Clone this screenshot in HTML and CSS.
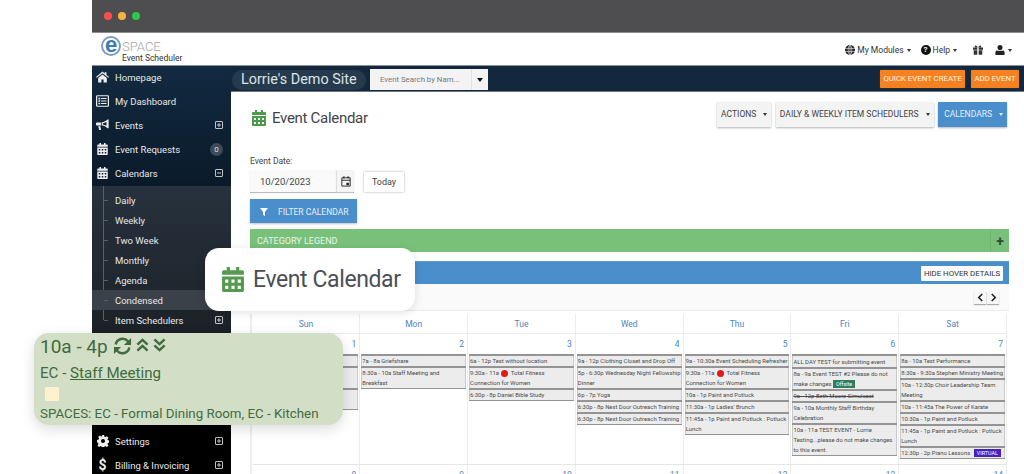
FILE: index.html
```html
<!DOCTYPE html>
<html lang="en">
<head>
<meta charset="utf-8">
<title>Event Calendar</title>
<link rel="stylesheet" href="styles.css">
</head>
<body>
<svg class="defs" width="0" height="0" aria-hidden="true">
  <symbol id="i-cal" viewBox="0 0 14 16"><path d="M3 0h2v2h4V0h2v2h2a1 1 0 0 1 1 1v2H0V3a1 1 0 0 1 1-1h2zM0 6h14v9a1 1 0 0 1-1 1H1a1 1 0 0 1-1-1zm2 2v2h2V8zm4 0v2h2V8zm4 0v2h2V8zm-8 4v2h2v-2zm4 0v2h2v-2zm4 0v2h2v-2z" fill-rule="evenodd" fill="currentColor"/></symbol>
  <symbol id="i-home" viewBox="0 0 18 15"><path d="M9 0l3 2.500V1h2.500v3.600L18 7.500 17 8.700 9 2.200 1 8.700 0 7.500zM3 9l6-5 6 5v6h-4.500v-4h-3v4H3z" fill="currentColor"/></symbol>
  <symbol id="i-list" viewBox="0 0 16 14"><path d="M1.500 0h13A1.500 1.500 0 0 1 16 1.500v11a1.500 1.500 0 0 1-1.500 1.500h-13A1.500 1.500 0 0 1 0 12.500v-11A1.500 1.500 0 0 1 1.500 0zm0 1.300v11.400h13V1.300zM3 3h2v2H3zm3 .4h7v1.200H6zM3 6h2v2H3zm3 .4h7v1.200H6zM3 9h2v2H3zm3 .4h7v1.200H6z" fill-rule="evenodd" fill="currentColor"/></symbol>
  <symbol id="i-horn" viewBox="0 0 18 15"><path d="M16 0h1.500v12H16c-2-2-5-3.500-8-3.700V3.700C11 3.500 14 2 16 0zM14.500 3.300C13 4.200 11 4.900 9.500 5.100v1.800c1.500.2 3.500.9 5 1.800zM1 4h6v4.300H1c-.6 0-1-.4-1-1V5c0-.6.4-1 1-1zm2 5.300h3l1 5H4.500z" fill-rule="evenodd" fill="currentColor"/></symbol>
  <symbol id="i-gear" viewBox="0 0 16 16"><path d="M6.500 0h3l.4 2.200 1.400.6L13.200 1.500l2.100 2.100-1.300 1.900.6 1.400 2.200.4v3l-2.200.4-.6 1.400 1.300 1.900-2.100 2.100-1.900-1.300-1.400.6-.4 2.200h-3l-.4-2.200-1.400-.6-1.900 1.300L.7 14l1.300-1.900-.6-1.400L0 9.500v-3l2.200-.4.6-1.400L1.500 2.800 3.600.7l1.900 1.300 1.400-.6zM8 5.300a2.700 2.700 0 1 0 0 5.400 2.700 2.700 0 0 0 0-5.400z" fill-rule="evenodd" fill="currentColor"/></symbol>
  <symbol id="i-funnel" viewBox="0 0 12 12"><path d="M0 0h12L7.500 5.500V12l-3-2V5.500z" fill="currentColor"/></symbol>
  <symbol id="i-plusbox" viewBox="0 0 8 8"><path d="M1 .5h6a.5.500 0 0 1 .5.500v6a.5.500 0 0 1-.5.500H1A.5.500 0 0 1 .5 7V1A.5.500 0 0 1 1 .5zM2 4h4M4 2v4" fill="none" stroke="currentColor" stroke-width=".9"/></symbol>
  <symbol id="i-minusbox" viewBox="0 0 8 8"><path d="M1 .5h6a.5.500 0 0 1 .5.500v6a.5.500 0 0 1-.5.500H1A.5.500 0 0 1 .5 7V1A.5.500 0 0 1 1 .5zM2 4h4" fill="none" stroke="currentColor" stroke-width=".9"/></symbol>
  <symbol id="i-globe" viewBox="0 0 14 14"><circle cx="7" cy="7" r="7" fill="currentColor"/><path d="M0 4.800h14M0 9.200h14M7 0v14M7 0C3.500 3 3.500 11 7 14M7 0c3.500 3 3.500 11 0 14" fill="none" stroke="#fff" stroke-width=".8"/></symbol>
  <symbol id="i-gift" viewBox="0 0 14 13"><path d="M0 3h14v3H8V3H6v3H0zM1 7h5v6H1.500a.5.500 0 0 1-.5-.5zm7 0h5v5.500a.5.500 0 0 1-.5.500H8zM3 2.800C1.500 1.500 2.800-.5 4.500.4 5.700 1 6.600 2 7 3c.4-1 1.300-2 2.500-2.600 1.700-.9 3 1.100 1.500 2.400z" fill="currentColor"/></symbol>
  <symbol id="i-user" viewBox="0 0 12 13"><circle cx="6" cy="3.300" r="3.300" fill="currentColor"/><path d="M2 7.200c1.200.6 6.800.6 8 0 1.400.4 2 1.500 2 3v1.500c0 .7-.6 1.300-1.300 1.300H1.300C.6 13 0 12.400 0 11.700v-1.500c0-1.500.6-2.600 2-3z" fill="currentColor"/></symbol>
  <symbol id="i-picker" viewBox="0 0 12 13"><path d="M1 2h10v10H1zM1 5h10M3.500 0v3M8.500 0v3" fill="none" stroke="currentColor" stroke-width="1.100"/><rect x="6.500" y="8" width="3" height="3" fill="currentColor"/></symbol>
  <symbol id="i-sync" viewBox="0 0 20 20"><path d="M2.800 8.500A7.500 7.500 0 0 1 15.800 5l2.200 2.500M17.200 11.500A7.500 7.500 0 0 1 4.200 15L2 12.500" fill="none" stroke="currentColor" stroke-width="2.600"/><path d="M19 1.500V9h-7.500zM1 18.500V11h7.500z" fill="currentColor"/></symbol>
  <symbol id="i-up2" viewBox="0 0 14 16"><path d="M1.500 7.500L7 2.500l5.500 5M1.500 14L7 9l5.500 5" fill="none" stroke="currentColor" stroke-width="2.600"/></symbol>
  <symbol id="i-down2" viewBox="0 0 14 16"><path d="M1.500 2L7 7l5.500-5M1.500 8.500L7 13.500l5.500-5" fill="none" stroke="currentColor" stroke-width="2.600"/></symbol>
  <symbol id="i-left" viewBox="0 0 8 10"><path d="M6 1L2 5l4 4" fill="none" stroke="currentColor" stroke-width="1.800"/></symbol>
  <symbol id="i-right" viewBox="0 0 8 10"><path d="M2 1l4 4-4 4" fill="none" stroke="currentColor" stroke-width="1.800"/></symbol>
</svg>

<div class="window">
  <div class="chrome">
    <span class="dot dot-red"></span><span class="dot dot-yellow"></span><span class="dot dot-green"></span>
  </div>

  <header class="header">
    <div class="logo">
      <span class="logo-e">e</span>
      <div class="logo-text">
        <span class="logo-space">SPACE</span>
        <span class="logo-sub">Event Scheduler</span>
      </div>
    </div>
    <nav class="top-links">
      <span class="top-link link-modules"><svg class="ti"><use href="#i-globe"/></svg>My Modules<i class="caret"></i></span>
      <span class="top-link link-help"><span class="help-ic">?</span>Help<i class="caret"></i></span>
      <span class="top-link link-gift"><svg class="ti"><use href="#i-gift"/></svg></span>
      <span class="top-link link-user"><svg class="ti"><use href="#i-user"/></svg><i class="caret"></i></span>
    </nav>
  </header>

  <div class="main">
    <aside class="sidebar">
      <div class="side-top">
        <a class="side-item"><svg class="si"><use href="#i-home"/></svg><span>Homepage</span></a>
        <a class="side-item"><svg class="si"><use href="#i-list"/></svg><span>My Dashboard</span></a>
        <a class="side-item"><svg class="si"><use href="#i-horn"/></svg><span>Events</span><svg class="pm"><use href="#i-plusbox"/></svg></a>
        <a class="side-item"><svg class="si"><use href="#i-cal"/></svg><span>Event Requests</span><b class="count">0</b></a>
        <a class="side-item"><svg class="si"><use href="#i-cal"/></svg><span>Calendars</span><svg class="pm"><use href="#i-minusbox"/></svg></a>
      </div>
      <ul class="sub">
        <li>Daily</li>
        <li>Weekly</li>
        <li>Two Week</li>
        <li>Monthly</li>
        <li>Agenda</li>
        <li class="sub-active">Condensed</li>
        <li>Item Schedulers<svg class="pm"><use href="#i-plusbox"/></svg></li>
      </ul>
      <div class="side-hidden"></div>
      <div class="side-bottom">
        <a class="side-item"><svg class="si gear"><use href="#i-gear"/></svg><span>Settings</span><svg class="pm"><use href="#i-plusbox"/></svg></a>
        <a class="side-item"><b class="si dollar">$</b><span>Billing &amp; Invoicing</span><svg class="pm"><use href="#i-plusbox"/></svg></a>
      </div>
    </aside>

    <div class="right">
      <div class="navbar">
        <span class="site">Lorrie's Demo Site</span>
        <div class="search">
          <span class="search-text">Event Search by Nam...</span>
          <span class="search-drop"><i class="caret dark"></i></span>
        </div>
        <div class="nav-actions">
          <span class="orange orange-quick">QUICK EVENT CREATE</span>
          <span class="orange orange-add">ADD EVENT</span>
        </div>
      </div>

      <div class="content">
        <div class="title-row">
          <h1 class="title"><svg class="title-ic"><use href="#i-cal"/></svg>Event Calendar</h1>
          <div class="title-btns">
            <span class="btn">ACTIONS<i class="caret dark"></i></span>
            <span class="btn">DAILY &amp; WEEKLY ITEM SCHEDULERS<i class="caret dark"></i></span>
            <span class="btn btn-blue">CALENDARS<i class="caret"></i></span>
          </div>
        </div>

        <label class="date-label">Event Date:</label>
        <div class="date-row">
          <div class="date-input"><span class="date-val">10/20/2023</span><span class="date-pick"><svg><use href="#i-picker"/></svg></span></div>
          <span class="today">Today</span>
        </div>
        <div class="filter"><svg><use href="#i-funnel"/></svg>FILTER CALENDAR</div>

        <div class="legend"><span>CATEGORY LEGEND</span><span class="legend-plus">+</span></div>

        <div class="panel-bar"><span class="hide-hover">HIDE HOVER DETAILS</span></div>
        <div class="cal-nav"><span class="arrow"><svg><use href="#i-left"/></svg></span><span class="arrow"><svg><use href="#i-right"/></svg></span></div>

        <div class="cal">
          <div class="cal-head">
            <div>Sun</div><div>Mon</div><div>Tue</div><div>Wed</div><div>Thu</div><div>Fri</div><div>Sat</div>
          </div>
          <div class="week">
            <div class="day"><div class="num">1</div><div class="ev"></div><div class="ev two"></div><div class="ev two"></div></div>
            <div class="day"><div class="num">2</div>
              <div class="ev">7a - 8a Griefshare</div>
              <div class="ev">8:30a - 10a Staff Meeting and<br>Breakfast</div>
            </div>
            <div class="day"><div class="num">3</div>
              <div class="ev">6a - 12p Test without location</div>
              <div class="ev">9:30a - 11a <i class="red"></i> Total Fitness Connection for Women</div>
              <div class="ev">6:30p - 8p Daniel Bible Study</div>
            </div>
            <div class="day"><div class="num">4</div>
              <div class="ev">9a - 12p Clothing Closet and Drop Off</div>
              <div class="ev">5p - 6:30p Wednesday Night Fellowship Dinner</div>
              <div class="ev">6p - 7p Yoga</div>
              <div class="ev">6:30p - 8p Next Door Outreach Training</div>
              <div class="ev">6:30p - 8p Next Door Outreach Training</div>
            </div>
            <div class="day"><div class="num">5</div>
              <div class="ev">9a - 10:30a Event Scheduling Refresher</div>
              <div class="ev">9:30a - 11a <i class="red"></i> Total Fitness Connection for Women</div>
              <div class="ev">10a - 1p Paint and Potluck</div>
              <div class="ev">11:30a - 1p Ladies' Brunch</div>
              <div class="ev">11:45a - 1p Paint and Potluck : Potluck Lunch</div>
            </div>
            <div class="day"><div class="num">6</div>
              <div class="ev allday">ALL DAY TEST for submitting event</div>
              <div class="ev">8a - 9a Event TEST #2 Please do not make changes <b class="tag tag-off">Offsite</b></div>
              <div class="ev struck"><s>9a - 12p Beth Moore Simulcast</s></div>
              <div class="ev">9a - 10a Monthly Staff Birthday Celebration</div>
              <div class="ev">10a - 11a TEST EVENT - Lorrie Testing...please do not make changes to this event.</div>
            </div>
            <div class="day"><div class="num">7</div>
              <div class="ev">8a - 10a Test Performance</div>
              <div class="ev">8:30a - 9:30a Stephen Ministry Meeting</div>
              <div class="ev">10a - 12:30p Choir Leadership Team Meeting</div>
              <div class="ev">10a - 11:45a The Power of Karate</div>
              <div class="ev">10:30a - 1p Paint and Potluck</div>
              <div class="ev">11:45a - 1p Paint and Potluck : Potluck Lunch</div>
              <div class="ev">12:30p - 2p Piano Lessons <b class="tag tag-virt">VIRTUAL</b></div>
            </div>
          </div>
          <div class="week">
            <div class="day"><div class="num">8</div></div>
            <div class="day"><div class="num">9</div></div>
            <div class="day"><div class="num">10</div></div>
            <div class="day"><div class="num">11</div></div>
            <div class="day"><div class="num">12</div></div>
            <div class="day"><div class="num">13</div></div>
            <div class="day"><div class="num">14</div></div>
          </div>
        </div>
      </div>
    </div>
  </div>
</div>

<div class="callout"><svg class="callout-ic"><use href="#i-cal"/></svg>Event Calendar</div>

<div class="hover-card">
  <div class="hc-time">10a - 4p <svg class="hc-sync"><use href="#i-sync"/></svg><svg class="hc-ch"><use href="#i-up2"/></svg><svg class="hc-ch"><use href="#i-down2"/></svg></div>
  <div class="hc-title">EC - <u>Staff Meeting</u></div>
  <div class="hc-swatch"></div>
  <div class="hc-spaces">SPACES: EC - Formal Dining Room, EC - Kitchen</div>
</div>
</body>
</html>
```

FILE: styles.css
```css
* { box-sizing: border-box; }
html, body { margin: 0; padding: 0; height: 474px; overflow: hidden; background: #fff; }
body { font-family: Roboto, "Liberation Sans", sans-serif; position: relative; color: #444; }
.defs { position: absolute; }
i { font-style: normal; }

.window { margin-left: 92px; height: 474px; display: flex; flex-direction: column; overflow: hidden; }

.chrome { height: 33px; background: #4e4e50; border-bottom: 1px solid #8d8d8f; display: flex; align-items: center; gap: 6px; padding: 0 0 1px 12px; flex: none; }
.dot { width: 8px; height: 8px; border-radius: 50%; }
.dot-red { background: #fb4f4f; }
.dot-yellow { background: #fbb13c; }
.dot-green { background: #2ac949; }

.header { height: 33px; flex: none; background: #fff; display: flex; justify-content: space-between; align-items: center; padding: 0 12px 0 9px; border-bottom: 1px solid #8b9099; }
.logo { display: flex; position: relative; height: 32px; }
.logo-e { width: 20px; height: 20px; margin-top: 3px; border-radius: 50%; border: 2px solid #7f9dbd; color: #3a7ab5; font: 700 22px/13px "Liberation Sans", sans-serif; text-align: center; background: #fff; }
.logo-text { display: flex; flex-direction: column; margin-left: 1px; }
.logo-space { font: 300 13px/14px Roboto, sans-serif; color: #a3a5a8; margin-top: 7px; }
.logo-sub { font: 400 8.500px/9px Roboto, sans-serif; color: #333; }

.top-links { display: flex; align-items: center; font-size: 8.500px; color: #333; height: 100%; padding-top: 2px; }
.top-link { display: inline-flex; align-items: center; }
.ti { width: 10px; height: 10px; color: #222; margin-right: 2px; }
.help-ic { width: 10px; height: 10px; border-radius: 50%; background: #111; color: #fff; font: 700 8px/10px Roboto, sans-serif; text-align: center; margin-right: 2px; }
.link-help { margin-left: 10px; }
.link-gift { margin-left: 16px; }
.link-gift .ti { color: #333; margin-right: 0; }
.link-user { margin-left: 12px; }
.link-user .ti { margin-right: 0; }
.caret { display: inline-block; width: 0; height: 0; border-left: 2.500px solid transparent; border-right: 2.500px solid transparent; border-top: 3px solid currentColor; margin-left: 3px; }

.main { flex: 1; display: flex; min-height: 0; }

.sidebar { width: 139px; flex: none; background: #000; color: #e8e8e8; font-size: 9.500px; display: flex; flex-direction: column; }
.side-top { background: linear-gradient(#132a40, #0a1a2a); height: 120px; flex: none; }
.side-item { height: 24px; display: flex; align-items: center; padding: 0 8px 0 4px; }
.side-top .side-item { padding-bottom: 2px; }
.side-item span { flex: 1; margin-left: 6px; }
.si { width: 13px; height: 12px; color: #eee; flex: none; }
.gear { width: 12px; height: 12px; margin-left: 1px; }
.dollar { font: 700 14px/14px Roboto, sans-serif; text-align: center; height: 14px; }
.pm { width: 8px; height: 8px; color: #d5d5d5; flex: none; }
.count { width: 13px; height: 13px; border-radius: 50%; background: #3d4a58; color: #ddd; font: 400 8px/13px Roboto, sans-serif; text-align: center; }
.sub { list-style: none; margin: 0; padding: 4px 0 3px; background: linear-gradient(#27323e, #1c2127); height: 147px; flex: none; position: relative; }
.sub::before { content: ""; position: absolute; left: 11px; top: 0; bottom: 13px; width: 1px; background: #56606a; }
.sub li { height: 20px; display: flex; align-items: center; justify-content: space-between; padding: 0 8px 0 23px; position: relative; }
.sub li::before { content: ""; position: absolute; left: 12px; top: 10px; width: 4px; height: 1px; background: #56606a; }
.sub-active { background: #3b4149; }
.side-hidden { height: 96px; flex: none; }
.side-bottom { flex: none; }

.right { flex: 1; min-width: 0; display: flex; flex-direction: column; }
.navbar { height: 26px; flex: none; background: #13283d; display: flex; align-items: flex-start; padding: 3px 5px 0 1px; border-bottom: 1px solid #6d7680; }
.site { height: 20px; margin-top: 1px; border-radius: 10px; background: #263a4e; color: #dfe3e6; font-size: 14.400px; line-height: 20px; padding: 0 9px; white-space: nowrap; width: 134px; }
.search { width: 118px; height: 21px; margin-left: 4px; background: #f3f3f3; display: flex; align-items: center; font-size: 7.800px; color: #777; }
.search-text { flex: 1; padding-left: 10px; white-space: nowrap; }
.search-drop { width: 17px; height: 100%; border-left: 1px solid #e2e2e2; display: flex; align-items: center; justify-content: center; }
.caret.dark { color: #333; }
.search-drop .caret { margin: 0; border-left-width: 3px; border-right-width: 3px; border-top-width: 4px; color: #111; }
.nav-actions { margin-left: auto; display: flex; gap: 6px; margin-top: 1px; }
.orange { height: 18px; background: #f58220; color: #fff3e6; font-size: 7.800px; line-height: 18px; text-align: center; border-radius: 1px; box-shadow: 0 0 1px #a85a10; white-space: nowrap; }
.orange-quick { width: 85px; }
.orange-add { width: 48px; }

.content { flex: 1; min-height: 0; padding: 0 15px 0 19px; overflow: hidden; background: #fff; }
.title-row { display: flex; justify-content: space-between; height: 64px; padding-top: 10px; }
.title { margin: 0; font-weight: 400; font-size: 15px; line-height: 32px; height: 32px; color: #444; display: flex; align-items: flex-start; letter-spacing: -0.3px; }
.title-ic { width: 14px; height: 16px; color: #4c9a4c; margin: 8px 6px 0 2px; }
.title-btns { display: flex; gap: 4.500px; margin-right: 2px; height: 25px; }
.btn { height: 25px; background: #f3f3f3; color: #444; font-size: 8.500px; line-height: 25px; padding: 0 4px; box-shadow: 0 1px 2px rgba(0,0,0,.3); white-space: nowrap; }
.btn .caret { margin-left: 7px; vertical-align: middle; }
.btn-blue { background: #4a8ecb; color: #e4effa; padding-left: 6px; }

.date-label { display: block; font-size: 8.500px; line-height: 10px; color: #444; }
.date-row { display: flex; align-items: center; margin-top: 5px; gap: 10px; height: 22px; }
.date-input { width: 104px; height: 22px; background: #fafafa; border-bottom: 1px solid #bbb; display: flex; justify-content: space-between; box-shadow: 0 0 1px #ccc; }
.date-val { font-size: 9.500px; line-height: 22px; padding-left: 10px; color: #444; }
.date-pick { width: 17px; display: flex; align-items: center; justify-content: center; background: #f5f5f5; box-shadow: -1px 0 1px #ddd; }
.date-pick svg { width: 10px; height: 11px; color: #222; }
.today { width: 40px; height: 20px; background: #fff; box-shadow: 0 0 2px rgba(0,0,0,.35); font-size: 9px; line-height: 20px; text-align: center; color: #444; }
.filter { width: 107px; height: 24px; margin-top: 6px; padding-top: 1px; background: #4a8ecb; color: #e4effa; font-size: 8.500px; line-height: 24px; display: flex; align-items: center; padding-left: 10px; box-shadow: 0 1px 2px rgba(0,0,0,.25); }
.filter svg { width: 8px; height: 8px; color: #fff; margin-right: 10px; }
.legend { height: 23px; margin-top: 6px; background: #79c17a; color: #e9f5e9; font-size: 9px; line-height: 24px; display: flex; justify-content: space-between; padding-left: 7px; }
.legend-plus { width: 19px; border-left: 1px solid #6cb46e; color: #2f4d33; font: 700 14px/24px Roboto, sans-serif; text-align: center; }
.panel-bar { height: 23px; margin-top: 9px; background: #4a8ecb; display: flex; justify-content: flex-end; align-items: center; padding-right: 6px; border-top: 1px solid #5b9bd3; }
.hide-hover { height: 15px; width: 82px; background: #fbfbfb; color: #333; font-size: 7.800px; line-height: 15px; text-align: center; border-radius: 1px; }
.cal-nav { height: 27px; background: #fafafa; display: flex; justify-content: flex-end; align-items: center; gap: 1px; padding-right: 10px; border-bottom: 1px solid #ececec; }
.arrow { width: 12px; height: 13px; background: #f7f7f7; box-shadow: 0 1px 1px rgba(0,0,0,.3); color: #222; display: flex; align-items: center; justify-content: center; }
.arrow svg { width: 7px; height: 9px; }
.cal { width: 757px; padding-left: .5px; border-left: 2px solid #eee; margin-top: 3px; }
.cal-head { display: grid; grid-template-columns: repeat(7, 1fr); height: 20px; border-bottom: 1px solid #ececec; }
.cal-head div { color: #4a86c0; font-size: 8.500px; line-height: 20px; text-align: center; border-right: 1px solid #ececec; }
.week { display: grid; grid-template-columns: repeat(7, 1fr); height: 131px; border-bottom: 1px solid #e6e6e6; }
.week + .week { height: 20px; }
.day { border-right: 1.500px solid #ececec; padding: 3px 1px 0 1px; min-width: 0; }
.num { color: #4a86c0; font-size: 8.500px; line-height: 14px; text-align: right; padding-right: 2px; height: 17px; }
.ev { background: #ececec; border-top: 2px solid #949494; box-shadow: inset 1px 0 #c8c8c8, inset -1px 0 #c8c8c8; font-size: 5.900px; line-height: 10px; color: #4a4a4a; padding: 0 0 0 1px; min-height: 12px; }
.ev:last-child { border-bottom: 1px solid #949494; }
.ev.two { height: 22px; }
.allday { padding-top: 1px; }
.struck s { color: #4a4a4a; }
.red { display: inline-block; width: 7px; height: 7px; margin: 0 1px; border-radius: 50%; background: #e2191c; vertical-align: -1.500px; }
.tag { display: inline-block; color: #fff; font-weight: 400; font-size: 5.400px; line-height: 8px; padding: 0 3px; }
.tag-off { background: #2e7d5f; }
.tag-virt { background: #4a1fc2; margin-left: 2px; }

.callout { position: absolute; left: 205px; top: 248px; width: 210px; height: 63px; background: #fff; border-radius: 14px; box-shadow: 0 2px 10px rgba(0,0,0,.12); display: flex; align-items: center; padding-left: 17px; font-size: 23px; color: #4b4f55; letter-spacing: -0.4px; }
.callout-ic { width: 22px; height: 25px; color: #559a4e; margin-right: 9px; }

.hover-card { position: absolute; left: 34px; top: 333px; width: 309px; height: 92px; background: #d2dfc6; border-radius: 15px; box-shadow: 0 4px 14px rgba(0,0,0,.14); padding: 2px 6px; color: #3f6b3f; }
.hc-time { font-size: 19px; line-height: 24px; display: flex; align-items: center; white-space: pre; }
.hc-sync { width: 19px; height: 20px; margin-left: 1px; margin-top: -2px; }
.hc-ch { width: 13px; height: 16px; margin-left: 4px; margin-top: -4px; }
.hc-title { font-size: 15.100px; line-height: 18px; margin-top: 5px; }
.hc-swatch { width: 14px; height: 14px; margin: 5px 0 0 5px; background: #fdf2d0; border-radius: 1px; }
.hc-spaces { font-size: 13.300px; line-height: 16px; margin-top: 5px; white-space: nowrap; }
```
